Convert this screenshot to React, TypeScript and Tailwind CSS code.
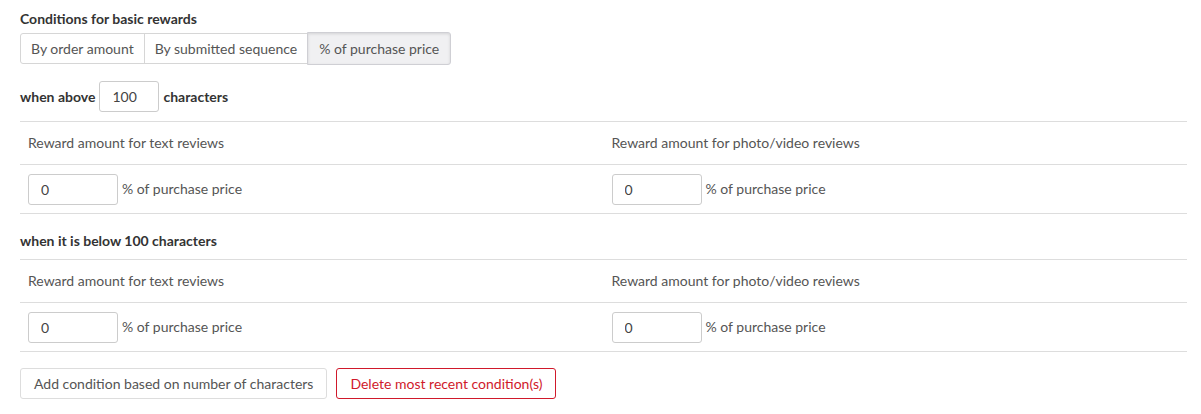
import React from "react";

const font = { fontFamily: "Lato, 'Liberation Sans', sans-serif" };

const modes = ["By order amount", "By submitted sequence", "% of purchase price"];

const NumberInput: React.FC<{ value: string; width: string }> = ({ value, width }) => (
  <input
    readOnly
    value={value}
    className={`${width} h-[31px] rounded-[3px] border border-[#cccccc] bg-white px-3 text-[14px] text-[#444] outline-none`}
  />
);

const RewardBlock: React.FC = () => (
  <div className="border-t border-[#dddddd]">
    <div className="grid grid-cols-2 border-b border-[#dddddd]">
      <div className="flex h-[42px] items-center px-2 text-[#555]">Reward amount for text reviews</div>
      <div className="flex h-[42px] items-center px-2 text-[#555]">Reward amount for photo/video reviews</div>
    </div>
    <div className="grid grid-cols-2 border-b border-[#dddddd]">
      {[0, 1].map((i) => (
        <div key={i} className="flex h-[48px] items-center gap-1 px-2 text-[#555]">
          <NumberInput value="0" width="w-[90px]" />
          <span>% of purchase price</span>
        </div>
      ))}
    </div>
  </div>
);

export default function App() {
  return (
    <div className="min-h-screen bg-white pl-5 pr-[14px] pt-[9px] text-[14px] leading-5" style={font}>
      <h3 className="font-bold text-[#333]">Conditions for basic rewards</h3>
      <div className="mt-[4px] flex">
        {modes.map((m, i) => (
          <button
            key={m}
            className={
              i === 2
                ? "-ml-px h-[33px] -mt-px rounded-r-[3px] border border-[#cfcfd4] bg-[#f0f0f2] px-[11px] text-[#555] shadow-[inset_0_1px_3px_rgba(0,0,0,0.12)]"
                : `h-[31px] border border-[#d6d6d6] bg-white px-[10px] text-[#555] ${i === 0 ? "rounded-l-[3px]" : "-ml-px"}`
            }
          >
            {m}
          </button>
        ))}
      </div>

      <div className="mt-[16px] mb-[9px] flex items-center gap-1 font-bold text-[#333]">
        <span>when above</span>
        <NumberInput value="100" width="w-[60px] font-normal" />
        <span>characters</span>
      </div>
      <RewardBlock />

      <div className="pt-[17px] pb-[8px] font-bold text-[#333]">when it is below 100 characters</div>
      <RewardBlock />

      <div className="mt-[16px] flex gap-[9px]">
        <button className="h-[31px] rounded-[3px] border border-[#dddddd] bg-white px-[13px] text-[#555]">
          Add condition based on number of characters
        </button>
        <button className="h-[31px] rounded-[3px] border border-[#d0192b] bg-white px-[13px] text-[#d0192b]">
          Delete most recent condition(s)
        </button>
      </div>
    </div>
  );
}
